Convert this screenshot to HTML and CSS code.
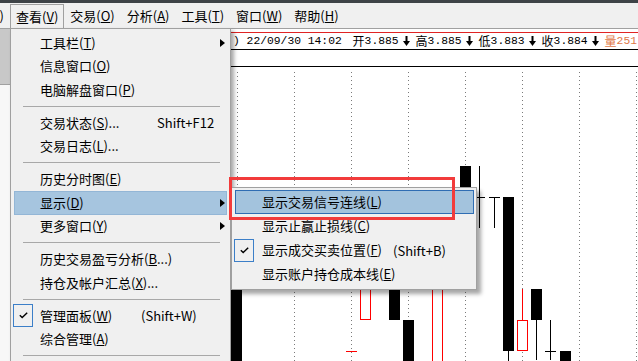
FILE: index.html
```html
<!DOCTYPE html>
<html lang="zh-CN">
<head>
<meta charset="utf-8">
<title>查看菜单</title>
<link rel="stylesheet" href="styles.css">
</head>
<body>
<div class="app">
  <div class="titlebar"></div>
  <div class="menubar">
    <span class="mb-item mb-first">文件(<u>F</u>)</span>
    <span class="mb-item mb-active">查看(<u>V</u>)</span>
    <span class="mb-item">交易(<u>O</u>)</span>
    <span class="mb-item">分析(<u>A</u>)</span>
    <span class="mb-item">工具(<u>T</u>)</span>
    <span class="mb-item">窗口(<u>W</u>)</span>
    <span class="mb-item">帮助(<u>H</u>)</span>
  </div>
  <div class="main">
    <div class="sidestrip"><div class="side-top"></div><div class="side-bottom"></div></div>
    <div class="chart">
      <div class="infobar">
        <span class="mono">) 22/09/30 14:02 </span>
        <span class="grp">
          <span class="cj">开</span><span class="mono">3.885</span><span class="dn"><svg width="7" height="10" viewBox="0 0 7 10"><rect x="2.5" y="0" width="2" height="6"/><polygon points="0,5 7,5 3.5,10"/></svg></span>
          <span class="cj">高</span><span class="mono">3.885</span><span class="dn"><svg width="7" height="10" viewBox="0 0 7 10"><rect x="2.5" y="0" width="2" height="6"/><polygon points="0,5 7,5 3.5,10"/></svg></span>
          <span class="cj">低</span><span class="mono">3.883</span><span class="dn"><svg width="7" height="10" viewBox="0 0 7 10"><rect x="2.5" y="0" width="2" height="6"/><polygon points="0,5 7,5 3.5,10"/></svg></span>
          <span class="cj">收</span><span class="mono">3.884</span><span class="dn"><svg width="7" height="10" viewBox="0 0 7 10"><rect x="2.5" y="0" width="2" height="6"/><polygon points="0,5 7,5 3.5,10"/></svg></span>
          <span class="cj vol">量</span><span class="mono vol">251</span>
        </span>
      </div>
      <div class="infogap"></div>
      <div class="canvas">
        <div class="vgrid" style="left:227px"></div>
        <div class="vgrid" style="left:284px"></div>
        <div class="vgrid" style="left:341px"></div>
        <div class="vgrid" style="left:398px"></div>
        <div class="vgrid" style="left:455px"></div>
        <div class="vgrid" style="left:512px"></div>
        <div class="vgrid" style="left:569px"></div>
        <div class="vgrid" style="left:626px"></div>

        <div class="body-bk" style="left:221px;top:183px;height:200px"></div>
        <div class="body-rd" style="left:350px;top:123px;height:130px"></div>
        <div class="body-bk" style="left:379px;top:133px;height:120px"></div>
        <div class="body-bk" style="left:393px;top:253px;height:100px"></div>
        <div class="tick-rd" style="left:336px;top:284px"></div>
        <div class="body-rd" style="left:422px;top:133px;height:300px"></div>
        <div class="body-bk" style="left:450px;top:99px;height:34px"></div>
        <div class="wick-bk" style="left:469px;top:99px;height:62px"></div>
        <div class="tick-bk" style="left:464px;top:130px"></div>
        <div class="tick-bk" style="left:479px;top:130px"></div>
        <div class="wick-bk" style="left:484px;top:130px;height:31px"></div>
        <div class="body-bk" style="left:493px;top:130px;height:154px"></div>
        <div class="wick-bk" style="left:498px;top:284px;height:30px"></div>
        <div class="wick-rd" style="left:512px;top:222px;height:31px"></div>
        <div class="body-rd" style="left:507px;top:253px;height:31px"></div>
        <div class="body-bk" style="left:521px;top:222px;height:31px"></div>
        <div class="wick-bk" style="left:526px;top:253px;height:40px"></div>
        <div class="wick-bk" style="left:540px;top:253px;height:40px"></div>
        <div class="tick-bk" style="left:535px;top:284px"></div>
        <div class="body-bk" style="left:550px;top:284px;height:30px"></div>
      </div>
    </div>
  </div>

  <div class="dropdown">
    <div class="mi"><span class="ic"></span><span class="lbl">工具栏(<u>T</u>)</span><span class="arr"></span></div>
    <div class="mi"><span class="ic"></span><span class="lbl">信息窗口(<u>O</u>)</span></div>
    <div class="mi"><span class="ic"></span><span class="lbl">电脑解盘窗口(<u>P</u>)</span></div>
    <div class="sep"></div>
    <div class="mi"><span class="ic"></span><span class="lbl lbl-f12">交易状态(<u>S</u>)...</span><span class="sc">Shift+F12</span></div>
    <div class="mi"><span class="ic"></span><span class="lbl">交易日志(<u>L</u>)...</span></div>
    <div class="sep"></div>
    <div class="mi"><span class="ic"></span><span class="lbl">历史分时图(<u>E</u>)</span></div>
    <div class="mi hl"><span class="ic"></span><span class="lbl">显示(<u>D</u>)</span><span class="arr"></span></div>
    <div class="mi"><span class="ic"></span><span class="lbl">更多窗口(<u>Y</u>)</span><span class="arr"></span></div>
    <div class="sep"></div>
    <div class="mi"><span class="ic"></span><span class="lbl">历史交易盈亏分析(<u>B</u>...)</span></div>
    <div class="mi"><span class="ic"></span><span class="lbl">持仓及帐户汇总(<u>X</u>)...</span></div>
    <div class="sep"></div>
    <div class="mi"><span class="ic checked"><svg width="9" height="7" viewBox="0 0 9 7"><polyline points="0.8,3.2 3.2,5.6 8.2,0.8" fill="none" stroke="#000" stroke-width="1.4"/></svg></span><span class="lbl lbl-w">管理面板(<u>W</u>)</span><span class="sc">(Shift+W)</span></div>
    <div class="mi"><span class="ic"></span><span class="lbl">综合管理(<u>A</u>)</span></div>
    <div class="sep"></div>
    <div class="menu-tail"></div>
  </div>

  <div class="submenu">
    <div class="mi hl-strong"><span class="ic"></span><span class="lbl">显示交易信号连线(<u>L</u>)</span></div>
    <div class="mi"><span class="ic"></span><span class="lbl">显示止赢止损线(<u>C</u>)</span></div>
    <div class="mi"><span class="ic checked"><svg width="9" height="7" viewBox="0 0 9 7"><polyline points="0.8,3.2 3.2,5.6 8.2,0.8" fill="none" stroke="#000" stroke-width="1.4"/></svg></span><span class="lbl lbl-b">显示成交买卖位置(<u>F</u>)</span><span class="sc">(Shift+B)</span></div>
    <div class="mi"><span class="ic"></span><span class="lbl">显示账户持仓成本线(<u>E</u>)</span></div>
  </div>

  <div class="annot"></div>
</div>
</body>
</html>
```

FILE: styles.css
```css
html, body {
  margin: 0;
  padding: 0;
}
body {
  width: 638px;
  height: 361px;
  overflow: hidden;
  font-family: "Noto Sans CJK SC", "Noto Sans", sans-serif;
  font-size: 13px;
  color: #000;
  background: #fff;
}
u {
  text-decoration: underline;
  text-underline-offset: 1px;
}
.app {
  position: relative;
  width: 638px;
  height: 361px;
  overflow: hidden;
  display: flex;
  flex-direction: column;
}
.titlebar {
  flex: none;
  height: 3px;
  background: #3e4347;
}
.menubar {
  flex: none;
  height: 25px;
  background: #f0f0f0;
  border-bottom: 1px solid #a0a0a0;
  display: flex;
  align-items: flex-start;
  padding-left: 10px;
  white-space: nowrap;
}
.mb-item {
  padding: 0 6px;
  line-height: 25px;
}
.mb-first {
  width: 55px;
  margin-left: -55px;
  box-sizing: border-box;
  text-align: right;
}
.mb-active {
  margin-top: 1px;
  padding: 0 5px;
  line-height: 23px;
  height: 24px;
  border: 1px solid #a0a0a0;
  border-bottom: none;
}
.main {
  flex: 1;
  display: flex;
  min-height: 0;
}
.sidestrip {
  flex: none;
  width: 10px;
  display: flex;
  flex-direction: column;
}
.side-top {
  height: 55px;
  background: #c8c8c8;
}
.side-bottom {
  flex: 1;
  background: #f7f7f7;
  border-top: 1px solid #a0a0a0;
}
.chart {
  flex: 1;
  min-width: 0;
  display: flex;
  flex-direction: column;
  background: #fff;
}
.infobar {
  flex: none;
  margin-top: 3px;
  height: 16px;
  border-top: 1px solid #e02424;
  border-bottom: 1px solid #000;
  padding-left: 223px;
  display: flex;
  align-items: center;
  white-space: nowrap;
  overflow: hidden;
}
.mono {
  font-family: "Liberation Mono", monospace;
  font-size: 11.33px;
  white-space: pre;
}
.grp {
  display: flex;
  align-items: center;
  margin-left: 4px;
}
.cj {
  display: inline-block;
  width: 12px;
  font-size: 12px;
  line-height: 16px;
  font-family: "Noto Sans CJK SC", sans-serif;
}
.dn {
  display: inline-flex;
  align-items: center;
  width: 17px;
  padding-left: 4px;
  box-sizing: border-box;
}
.vol {
  color: #e07848;
}
.infogap {
  flex: none;
  height: 16px;
  border-bottom: 1px solid #000;
}
.canvas {
  flex: 1;
  position: relative;
  overflow: hidden;
}
.vgrid {
  position: absolute;
  top: 5px;
  bottom: 0;
  width: 1px;
  background-image: linear-gradient(to bottom, #7a7a7a 1px, transparent 1px);
  background-size: 1px 4px;
}
.body-bk {
  position: absolute;
  width: 11px;
  background: #000;
}
.body-rd {
  position: absolute;
  width: 11px;
  box-sizing: border-box;
  border: 1px solid #ff0000;
  background: #fff;
}
.wick-bk, .wick-rd {
  position: absolute;
  width: 1px;
  background: #000;
}
.wick-rd {
  background: #ff0000;
}
.tick-bk, .tick-rd {
  position: absolute;
  width: 11px;
  height: 1px;
  background: #000;
}
.tick-rd {
  background: #ff0000;
}

/* menus */
.dropdown {
  position: absolute;
  left: 10px;
  top: 28px;
  width: 221px;
  box-sizing: border-box;
  background: #f0f0f0;
  border: 1px solid #a0a0a0;
  padding-top: 2px;
  box-shadow: 3px 3px 4px rgba(0, 0, 0, 0.35);
}
.menu-tail {
  height: 20px;
}
.mi {
  display: flex;
  align-items: center;
  height: 23.5px;
  margin: 0 3px;
  white-space: nowrap;
}
.ic {
  flex: none;
  width: 20px;
  height: 23px;
  margin-left: -1px;
  margin-right: 7px;
  box-sizing: border-box;
  display: flex;
  align-items: center;
  justify-content: center;
}
.ic.checked {
  border: 1px solid #3c7fc8;
}
.lbl {
  flex: 1;
  line-height: 20px;
}
.lbl-f12 {
  flex: none;
  width: 117px;
}
.lbl-w {
  flex: none;
  width: 101px;
}
.lbl-b {
  flex: none;
  width: 131px;
}
.sc {
  flex: none;
}
.arr {
  flex: none;
  width: 0;
  height: 0;
  border-left: 5px solid #000;
  border-top: 4px solid transparent;
  border-bottom: 4px solid transparent;
  margin-right: 2px;
}
.mi.hl {
  background: #a6c5df;
  box-shadow: inset 0 0 0 1px #93b6d6;
}
.sep {
  height: 1px;
  background: #a8a8a8;
  margin: 4px 10px 4.5px 12px;
}
.submenu {
  position: absolute;
  left: 231px;
  top: 187px;
  width: 246px;
  box-sizing: border-box;
  background: #f0f0f0;
  border: 1px solid #a0a0a0;
  padding: 2px 0 3px;
  box-shadow: 4px 4px 4px rgba(0, 0, 0, 0.35);
}
.submenu .mi {
  height: 24px;
  margin: 0 2px 0 3px;
}
.submenu .ic {
  margin-right: 8px;
}
.mi.hl-strong {
  background: #a3c3dd;
  box-shadow: inset 0 0 0 1px #2f6db3;
}
.annot {
  position: absolute;
  left: 229px;
  top: 177px;
  width: 226px;
  height: 43px;
  box-sizing: border-box;
  border: 3px solid #f23b3b;
}
```
